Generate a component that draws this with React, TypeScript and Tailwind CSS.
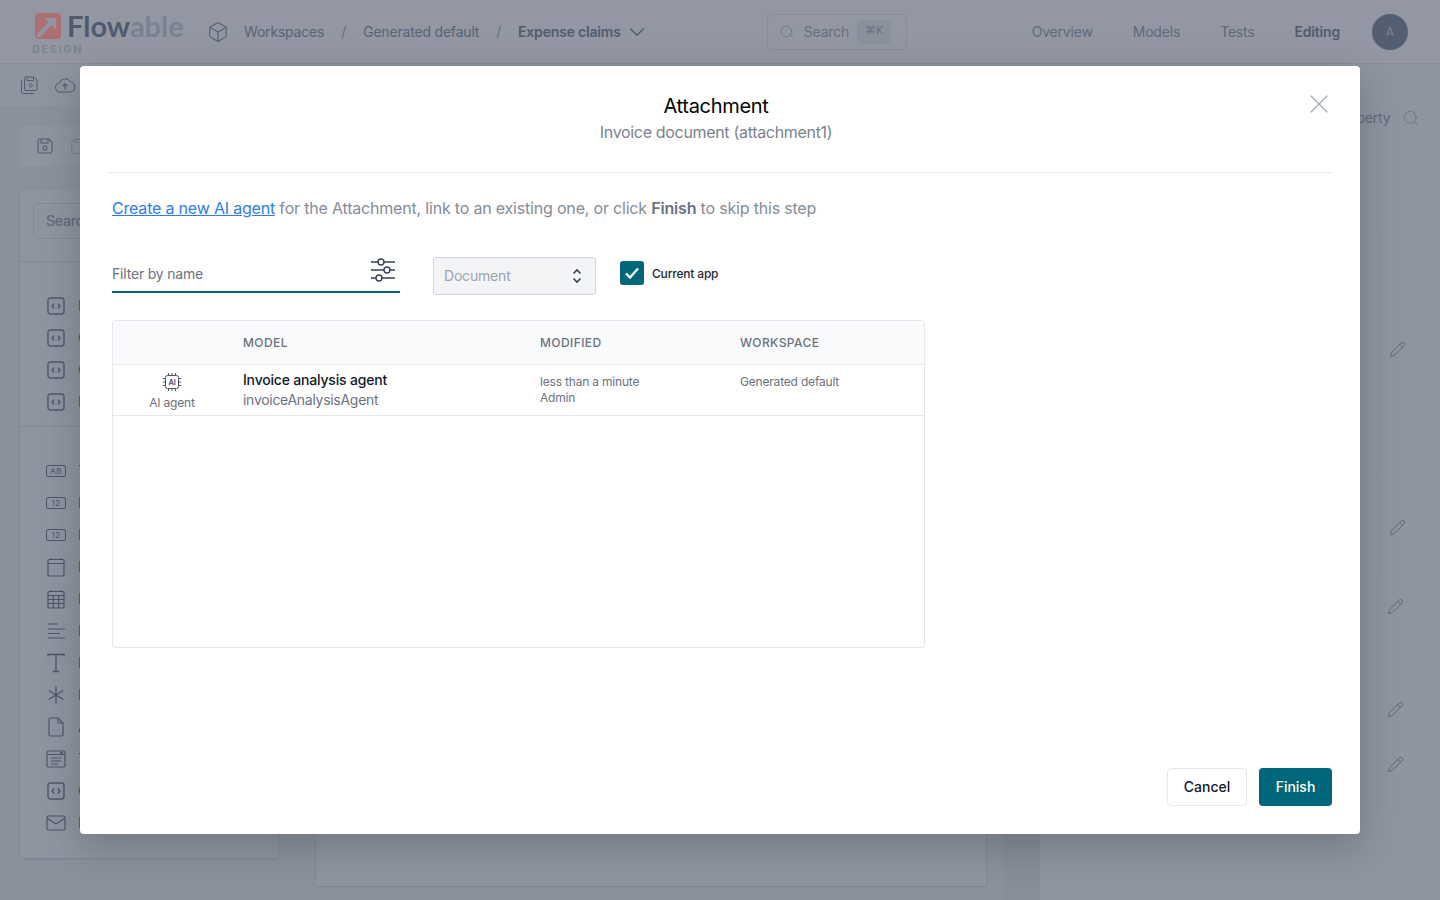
import React from 'react';
import { Search, X, ChevronDown, Box, Pencil, Clipboard } from 'lucide-react';

const CodeIcon: React.FC = () => (
  <svg width="18" height="18" viewBox="0 0 18 18" fill="none" stroke="currentColor" strokeWidth="1.4">
    <rect x="1" y="1" width="16" height="16" rx="2.5" />
    <path d="M7.2 6.5 5 9l2.2 2.5M10.8 6.5 13 9l-2.2 2.5" />
  </svg>
);

const BoxLabel: React.FC<{ text: string }> = ({ text }) => (
  <span className="w-5 h-3 border border-current rounded-[2px] flex items-center justify-center text-[8px] leading-none tracking-[0.5px]">
    {text}
  </span>
);

const CalendarIcon: React.FC<{ grid?: boolean }> = ({ grid }) => (
  <svg width="18" height="20" viewBox="0 0 18 20" fill="none" stroke="currentColor" strokeWidth="1.2">
    <rect x="1" y="2.5" width="16" height="16.5" rx="1.5" />
    <path d="M1 6.5h16M4.5 1v2M13.5 1v2" />
    {grid && <path d="M1 10.5h16M1 14.5h16M6.3 6.5V19M11.6 6.5V19" />}
  </svg>
);

const AlignIcon: React.FC = () => (
  <svg width="18" height="18" viewBox="0 0 18 18" fill="none" stroke="currentColor" strokeWidth="1.2">
    <path d="M1 2h10M1 7h17M1 11.5h12M1 16h17" />
  </svg>
);

const TextIcon: React.FC = () => (
  <svg width="18" height="20" viewBox="0 0 18 20" fill="none" stroke="currentColor" strokeWidth="1.3">
    <path d="M1 3.5V1.5h16v2M9 1.5V18.5M6 18.5h6" />
  </svg>
);

const StarIcon: React.FC = () => (
  <svg width="16" height="18" viewBox="0 0 16 18" fill="none" stroke="currentColor" strokeWidth="1.3">
    <path d="M8 0.5v17M0.8 4.5l14.4 9M15.2 4.5l-14.4 9" />
  </svg>
);

const FileIcon: React.FC = () => (
  <svg width="16" height="20" viewBox="0 0 16 20" fill="none" stroke="currentColor" strokeWidth="1.2">
    <path d="M2.5 1H10l5 5v11.5a1.5 1.5 0 0 1-1.5 1.5h-11A1.5 1.5 0 0 1 1 17.5v-15A1.5 1.5 0 0 1 2.5 1Z" />
    <path d="M10 1v5h5" />
  </svg>
);

const FormIcon: React.FC = () => (
  <svg width="20" height="18" viewBox="0 0 20 18" fill="none" stroke="currentColor" strokeWidth="1.2">
    <rect x="1" y="1" width="18" height="16" rx="1.5" />
    <path d="M1 4.5h18M5 8h10M5 11h10M5 14h7" />
    <path d="M14 2.8h3" strokeWidth="1.8" />
  </svg>
);

const MailIcon: React.FC = () => (
  <svg width="20" height="16" viewBox="0 0 20 16" fill="none" stroke="currentColor" strokeWidth="1.2">
    <rect x="1" y="1" width="18" height="14" rx="1.5" />
    <path d="m1 3 9 6 9-6" />
  </svg>
);

const FlowableMark: React.FC = () => (
  <svg width="26" height="26" viewBox="0 0 26 26" className="shrink-0">
    <rect width="26" height="26" rx="3.5" fill="#ab7074" />
    <path d="M9.5 5H21V16.5L16.5 12 5 24H2V21L13.5 9.5Z" fill="#8f95a1" />
  </svg>
);

const SaveAllIcon: React.FC = () => (
  <svg width="18" height="18" viewBox="0 0 18 18" fill="none" stroke="currentColor" strokeWidth="1">
    <path d="M6 1h8l3 3v9a1.500 1.500 0 0 1-1.500 1.500H6A1.500 1.500 0 0 1 4.500 13V2.500A1.500 1.500 0 0 1 6 1Z" />
    <path d="M7 1v3.500h6.500V1" />
    <circle cx="10.800" cy="9.500" r="1.500" />
    <path d="M1.500 4.500v11a2 2 0 0 0 2 2H14" />
  </svg>
);

const SaveIcon: React.FC = () => (
  <svg width="16" height="16" viewBox="0 0 16 16" fill="none" stroke="currentColor" strokeWidth="1.1">
    <path d="M2.500 1H12l3 3v9.500a1.500 1.500 0 0 1-1.500 1.500h-11A1.500 1.500 0 0 1 1 13.500v-11A1.500 1.500 0 0 1 2.500 1Z" />
    <path d="M4 1v4h7V1" />
    <circle cx="8" cy="10" r="2" />
  </svg>
);

const CloudUp: React.FC = () => (
  <svg width="22" height="16" viewBox="0 0 22 16" fill="none" stroke="currentColor" strokeWidth="1">
    <path d="M6 15a4.500 4.500 0 0 1-.6-8.950A6 6 0 0 1 16.500 5.100 5 5 0 0 1 16.500 15Z" />
    <path d="M11 12.500V7M8.600 9.200 11 6.800l2.400 2.400" strokeWidth="1.200" />
  </svg>
);

const SlidersIcon: React.FC = () => (
  <svg width="26" height="24" viewBox="0 0 26 24" fill="none" stroke="#374151" strokeWidth="1.4">
    <path d="M1 4h7M14 4h11M1 12h13M20 12h5M1 20h5M12 20h13" />
    <circle cx="11" cy="4" r="3" />
    <circle cx="17" cy="12" r="3" />
    <circle cx="9" cy="20" r="3" />
  </svg>
);

const AiChipIcon: React.FC = () => (
  <svg width="20" height="20" viewBox="0 0 20 20" fill="none" stroke="#4b5563" strokeWidth="1">
    <rect x="3.500" y="3.500" width="13" height="13" rx="2" />
    <path d="M6.500 1v2.500M10 1v2.500M13.500 1v2.500M6.500 16.500V19M10 16.500V19M13.500 16.500V19M1 6.500h2.500M1 10h2.500M1 13.500h2.500M16.500 6.500H19M16.500 10H19M16.500 13.500H19" />
    <text x="10" y="12.800" textAnchor="middle" fontSize="7.500" fontWeight="600" fill="#4b5563" stroke="none" fontFamily="Inter, sans-serif">AI</text>
  </svg>
);

const paletteTop = ['Expression', 'Case', 'Custom', 'Data'];

const paletteBottom: { label: string; icon: React.ReactNode }[] = [
  { label: 'Text', icon: <BoxLabel text="AB" /> },
  { label: 'Integer', icon: <BoxLabel text="12" /> },
  { label: 'Decimal', icon: <BoxLabel text="12" /> },
  { label: 'Date', icon: <CalendarIcon /> },
  { label: 'Datetime', icon: <CalendarIcon grid /> },
  { label: 'Multiline', icon: <AlignIcon /> },
  { label: 'Rich text', icon: <TextIcon /> },
  { label: 'Password', icon: <StarIcon /> },
  { label: 'Attachment', icon: <FileIcon /> },
  { label: 'Template', icon: <FormIcon /> },
  { label: 'Code', icon: <CodeIcon /> },
  { label: 'Email', icon: <MailIcon /> },
];

const PaletteRow: React.FC<{ label: string; icon: React.ReactNode }> = ({ label, icon }) => (
  <div className="h-8 flex items-center">
    <div className="w-11 flex justify-center text-[#7d8494]">{icon}</div>
    <span className="text-sm text-[#7d8494]">{label}</span>
  </div>
);

const Background: React.FC = () => (
  <div className="h-screen flex flex-col bg-[#f3f4f6] overflow-hidden">
    <header className="h-16 shrink-0 flex items-center bg-[#f9fafb] border-b border-[#e5e7eb] pr-8">
      <div className="w-[200px] pl-8 relative z-10 h-full shrink-0">
        <div className="flex items-center gap-[6px] pt-[13px] pl-[3px]">
          <FlowableMark />
          <span className="text-[29px] leading-[26px] font-bold font-['Lato',sans-serif] tracking-normal">
            <span className="text-[#505b6d]">Flow</span>
            <span className="text-[#7a8190]">able</span>
          </span>
        </div>
        <div className="text-[11px] leading-none font-bold tracking-[1.6px] text-[#7d8391] mt-[5px]">DESIGN</div>
      </div>
      <Box size={22} strokeWidth={1.2} className="text-[#8b92a0] ml-[7px]" />
      <span className="ml-[15px] text-sm text-[#939aa6]">Workspaces</span>
      <span className="ml-[17px] text-sm text-[#a4aab5]">/</span>
      <span className="ml-[17px] text-sm text-[#939aa6]">Generated default</span>
      <span className="ml-[17px] text-sm text-[#a4aab5]">/</span>
      <span className="ml-[17px] text-sm font-semibold text-[#858c99]">Expense claims</span>
      <ChevronDown size={26} strokeWidth={1.3} className="ml-[3px] text-[#858c99]" />
      <div className="ml-[117px] w-[140px] h-9 border border-[#e5e7eb] rounded flex items-center pl-[11px] text-[#adb2bc]">
        <Search size={16} strokeWidth={1.1} />
        <span className="ml-[9px] text-sm">Search</span>
        <span className="ml-2 px-2 h-6 flex items-center rounded-sm bg-[#eceef1] text-[11px] font-['DejaVu_Sans',sans-serif]">⌘K</span>
      </div>
      <nav className="ml-auto flex items-center text-sm text-[#a0a6b1]">
        <span>Overview</span>
        <span className="ml-10">Models</span>
        <span className="ml-10">Tests</span>
        <span className="ml-10 font-semibold text-[#858c99]">Editing</span>
      </nav>
      <div className="ml-8 w-9 h-9 rounded-full bg-[#87929f] text-[#c3c8d0] text-xs font-medium flex items-center justify-center">A</div>
    </header>

    <div className="h-[42px] shrink-0 flex items-center gap-[16px] pl-[20px] bg-[#f3f4f6] text-[#858c99]">
      <SaveAllIcon />
      <CloudUp />
    </div>

    <div className="flex-1 flex bg-[#eceef1]">
      <aside className="w-[258px] ml-5 shrink-0 pt-5">
        <div className="h-10 rounded bg-[#f3f4f6] flex items-center pl-[17px] gap-4 text-[#858c99]">
          <SaveIcon />
          <Clipboard size={17} strokeWidth={1.1} className="text-[#b9bec7]" />
        </div>
        <div className="mt-6 h-[668px] rounded bg-[#f3f4f6] shadow-sm px-[13px] pt-[13px]">
          <div className="h-9 border border-[#dcdfe4] rounded flex items-center pl-3 text-sm font-medium text-[#a4aab5]">Search</div>
          <div className="mt-[22px] border-t border-[#dcdfe4] pt-7 -mx-[13px]">
            {paletteTop.map((label) => (
              <div key={label} className="pl-[14px]">
                <PaletteRow label={label} icon={<CodeIcon />} />
              </div>
            ))}
          </div>
          <div className="mt-2 border-t border-[#dcdfe4] pt-7 -mx-[13px]">
            {paletteBottom.map((row) => (
              <div key={row.label} className="pl-[14px]">
                <PaletteRow label={row.label} icon={row.icon} />
              </div>
            ))}
          </div>
        </div>
      </aside>

      <main className="w-[670px] ml-[38px] mt-5 mb-[14px] bg-[#f3f4f6] shadow-sm shrink-0" />

      <div className="w-[37px] ml-[17px] shrink-0 bg-[#e5e7ea]" />

      <section className="flex-1 bg-[#f3f4f6] pl-[315px] relative">
        <div className="flex items-center h-6 pt-0 text-sm text-[#a4aab5]">
          <span className="-ml-[20px]">property</span>
          <Search size={18} strokeWidth={1} className="ml-[12px] text-[#a4aab5]" />
        </div>
        <div className="ml-[25px] mt-[98px] h-[246px] border-l border-[#e5e7eb] relative">
          <Pencil size={17} strokeWidth={1.1} className="absolute left-[8px] top-[113px] text-[#858c99]" />
        </div>
        <div className="ml-[25px] mt-[6px] h-[97px] border-l border-[#e5e7eb] relative">
          <Pencil size={17} strokeWidth={1.1} className="absolute left-[8px] top-[39px] text-[#858c99]" />
        </div>
        <Pencil size={17} strokeWidth={1.1} className="absolute left-[347px] top-[492px] text-[#858c99]" />
        <Pencil size={17} strokeWidth={1.1} className="absolute left-[347px] top-[595px] text-[#858c99]" />
        <Pencil size={17} strokeWidth={1.1} className="absolute left-[347px] top-[650px] text-[#858c99]" />
      </section>
    </div>
  </div>
);

const Modal: React.FC = () => (
  <div className="absolute z-20 left-20 top-[66px] w-[1280px] h-[768px] bg-white rounded shadow-[0_12px_40px_rgba(0,0,0,0.2)] flex flex-col px-7 pb-7">
    <div className="relative h-[107px] shrink-0 border-b border-[#e5e7eb] flex flex-col items-center pt-[27px] pr-2">
      <h2 className="text-xl leading-[26px] text-black font-normal tracking-[-0.3px]">Attachment</h2>
      <p className="text-base leading-[26px] text-[#7b828e] tracking-[-0.32px]">Invoice document (attachment1)</p>
      <X size={32} strokeWidth={0.85} className="absolute -right-[3px] top-[22px] text-[#9aa8b0]" />
    </div>

    <div className="px-1 flex-1 flex flex-col">
      <p className="mt-6 text-base leading-[22px] text-[#858c98]">
        <a href="#" className="text-[#2f7bf5] underline">Create a new AI agent</a> for the Attachment, link to an existing one, or click <strong className="font-semibold text-[#6b7280]">Finish</strong> to skip this step
      </p>

      <div className="mt-[38px] flex items-start">
        <div className="w-[288px] h-[38px] border-b-2 border-[#00667a] flex items-center justify-between pr-[4px] mt-[-2px]">
          <span className="text-sm text-[#6b7280] mt-[2px]">Filter by name</span>
          <span className="-mt-[6px]"><SlidersIcon /></span>
        </div>
        <div className="ml-[33px] w-[163px] h-[38px] bg-[#f3f4f6] border border-[#d1d5db] rounded-[3px] flex items-center justify-between pl-[10px] pr-[13px]">
          <span className="text-sm text-[#9ca3af]">Document</span>
          <svg width="10" height="16" viewBox="0 0 10 16" fill="none" stroke="#374151" strokeWidth="1.600">
            <path d="m1.500 5.500 3.500-3.500 3.500 3.500M1.500 10.500 5 14l3.500-3.500" />
          </svg>
        </div>
        <div className="ml-6 mt-1 flex items-center">
          <span className="w-6 h-6 rounded-[3px] bg-[#00667a] flex items-center justify-center">
            <svg width="16" height="14" viewBox="0 0 16 14" fill="none" stroke="#fff" strokeWidth="2.400">
              <path d="m2 7.500 4 4L14 2.500" />
            </svg>
          </span>
          <span className="ml-2 mt-[1px] text-xs font-medium text-[#1f2937]">Current app</span>
        </div>
      </div>

      <div className="mt-[25px] w-[813px] h-[328px] border border-[#e5e7eb] rounded-[3px] overflow-hidden">
        <div className="h-11 bg-[#f9fafb] border-b border-[#e5e7eb] flex items-center text-xs font-medium tracking-[0.4px] text-[#6b7280]">
          <span className="ml-[130px] w-[297px]">MODEL</span>
          <span className="w-[200px]">MODIFIED</span>
          <span>WORKSPACE</span>
        </div>
        <div className="h-[51px] border-b border-[#e5e7eb] flex items-center">
          <div className="w-[118px] flex flex-col items-center pt-[3px]">
            <AiChipIcon />
            <span className="text-xs leading-4 mt-[3px] text-[#6b7280]">AI agent</span>
          </div>
          <div className="ml-3 w-[297px]">
            <div className="text-sm leading-5 font-medium text-[#111827]">Invoice analysis agent</div>
            <div className="text-sm leading-5 text-[#6b7280] tracking-[-0.29px]">invoiceAnalysisAgent</div>
          </div>
          <div className="w-[200px] text-xs leading-4 text-[#6b7280]">
            <div>less than a minute</div>
            <div>Admin</div>
          </div>
          <div className="text-xs leading-4 text-[#6b7280] -mt-4">Generated default</div>
        </div>
      </div>

      <div className="mt-auto flex justify-end gap-3 -mx-1">
        <button className="w-20 h-[38px] bg-white border border-[#e5e7eb] rounded text-sm font-medium text-[#111827] tracking-normal">Cancel</button>
        <button className="w-[73px] h-[38px] bg-[#00667a] rounded text-sm font-medium text-white tracking-normal">Finish</button>
      </div>
    </div>
  </div>
);

export default function App() {
  return (
    <div className="relative h-screen overflow-hidden font-['Inter',sans-serif] tracking-[-0.19px]">
      <Background />
      <div className="absolute inset-0 bg-[#131f37]/45" />
      <Modal />
    </div>
  );
}
